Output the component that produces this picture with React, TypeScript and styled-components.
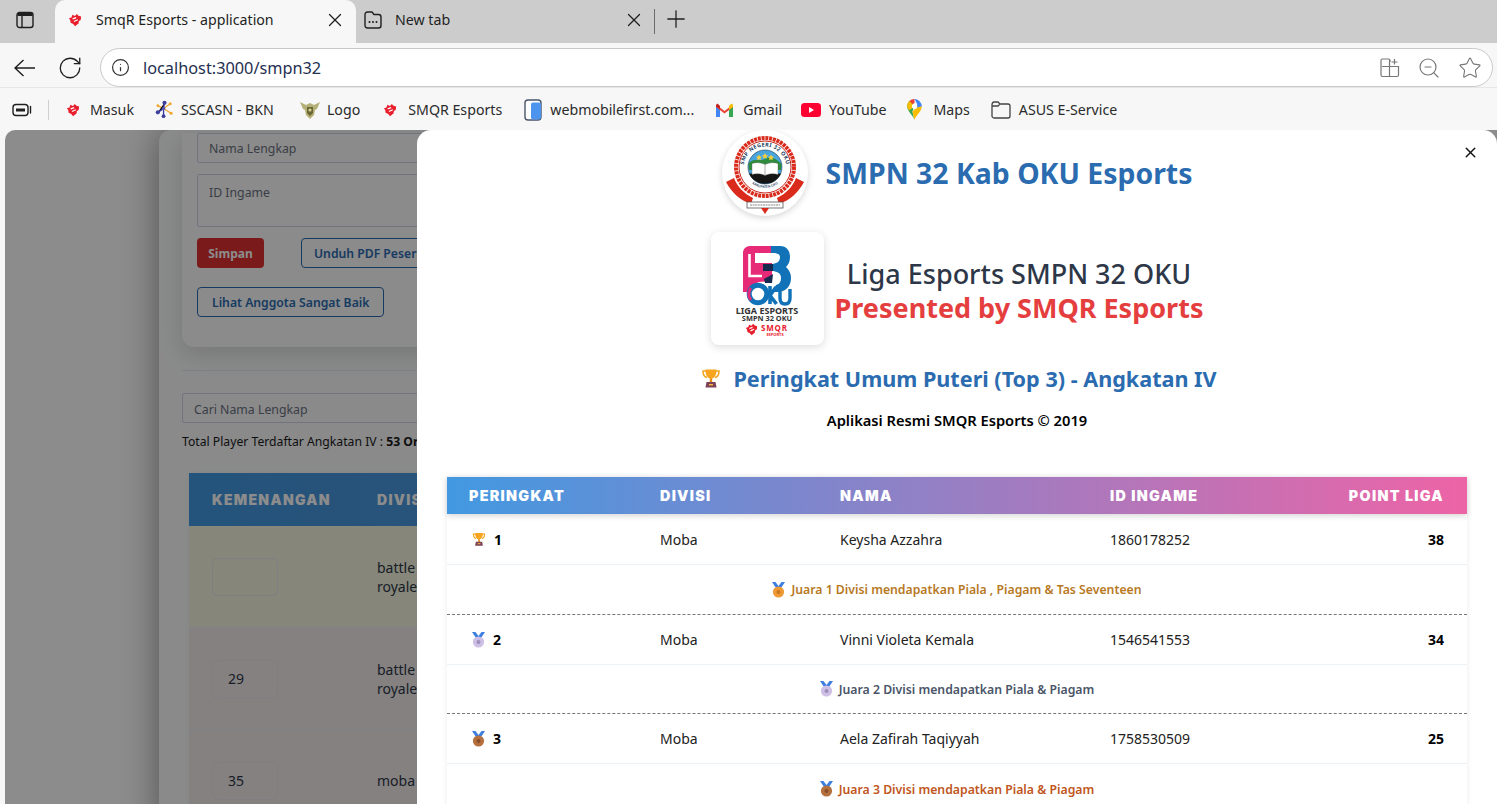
import React from 'react';
import styled, { createGlobalStyle } from 'styled-components';
import { RotateCw, Info, ZoomOut, Star, X, Plus } from 'lucide-react';

const GlobalStyle = createGlobalStyle`
  html, body {
    margin: 0;
    padding: 0;
    height: 100%;
    overflow: hidden;
    font-family: "Noto Sans", "Open Sans", sans-serif;
    background: #f7f7f7;
  }
  * { box-sizing: border-box; }
`;

const SmqrMark = ({ size = 14 }: { size?: number }) => (
  <svg width={size} height={size} viewBox="0 0 16 16">
    <path d="M1 6 L4 5 L5 2 L8 3.5 L10 1 L12 3 L15 4 L14.5 8 L12.5 9 L12 12 L8 15 L6 12.5 L3 11 L2.5 8 Z" fill="#e8202e" />
    <path d="M5 6 L9 4.5 L9.6 6 L5.6 7.5 Z M6.5 9 L11 7 L11.5 8.4 L7 10.4 Z" fill="#fff" />
  </svg>
);

const SscasnIcon = () => (
  <svg width="19" height="19" viewBox="0 0 20 20">
    <path d="M9 9 L17 14 M9 9 L16 4 M3 6 L9 9" stroke="#f0a830" strokeWidth="1.4" />
    <path d="M3 13 L9 9 L10 3 M9 9 L9 17" stroke="#3c3f9e" strokeWidth="1.4" />
    <circle cx="10" cy="3" r="2.2" fill="#3c3f9e" />
    <circle cx="3" cy="13" r="2.2" fill="#3c3f9e" />
    <circle cx="9" cy="17" r="2" fill="#3c3f9e" />
    <circle cx="16" cy="4" r="1.6" fill="#f0a830" />
    <circle cx="17" cy="14" r="1.6" fill="#f0a830" />
    <circle cx="3" cy="6" r="1.4" fill="#f0a830" />
    <circle cx="9" cy="9" r="1.8" fill="#5a55b8" />
  </svg>
);

const LogoIcon = () => (
  <svg width="20" height="20" viewBox="0 0 20 20">
    <path d="M0 2 L6 5 L10 3 L14 5 L20 2 L17 9 L15 10 L14 15 L10 19 L6 15 L5 10 L3 9 Z" fill="#b5b078" />
    <path d="M7 7 H13 V13 L10 16 L7 13 Z" fill="#6a6636" />
    <circle cx="10" cy="10" r="1.6" fill="#d8d48e" />
  </svg>
);

const PhoneIcon = () => (
  <svg width="20" height="22" viewBox="0 0 20 22">
    <rect x="1" y="1" width="16" height="20" rx="3" fill="#fff" stroke="#4a5568" strokeWidth="1.4" />
    <rect x="7" y="3.5" width="10" height="17" rx="2" fill="#4d94ee" />
  </svg>
);

const GmailIcon = () => (
  <svg width="17" height="14" viewBox="0 0 17 14">
    <path d="M0 2 V14 H4 V5 Z" fill="#4285f4" />
    <path d="M13 5 V14 H17 V2 Z" fill="#34a853" />
    <path d="M0 1.5 L8.5 8 L17 1.5 V4 L8.5 10.5 L0 4 Z" fill="#ea4335" />
    <path d="M13 3 L15.5 0.6 L17 2 V4 L13 7 Z" fill="#fbbc04" />
    <path d="M0 2 L1.5 0.6 L4 3 V6.2 L0 3.5 Z" fill="#c5221f" />
  </svg>
);

const YoutubeIcon = () => (
  <svg width="20" height="14" viewBox="0 0 20 14">
    <rect width="20" height="14" rx="3.5" fill="#ff0033" />
    <path d="M8 4 L13 7 L8 10 Z" fill="#fff" />
  </svg>
);

const MapsIcon = () => (
  <svg width="15" height="21" viewBox="0 0 14 20">
    <path d="M7 20 C6 16 0 12 0 7 C0 5 1 3 2 2 L7 7 L5 12 Z" fill="#34a853" />
    <path d="M7 20 C8 16 14 12 14 7 L9 8 L5 12 Z" fill="#fbbc04" />
    <path d="M2 2 C3.4 .7 5 0 7 0 L7 4 L4.5 5 Z" fill="#ea4335" />
    <path d="M7 0 C10 0 14 3 14 7 L9.5 8 L9.5 4.8 Z" fill="#4285f4" />
    <path d="M2 2 L7 7 L2 11 C.6 9.6 0 8.2 0 7 C0 5 1 3 2 2 Z" fill="#fbbc04" />
    <circle cx="7" cy="7" r="2.5" fill="#fff" />
  </svg>
);

const FolderIcon = () => (
  <svg width="20" height="18" viewBox="0 0 20 18" fill="none">
    <path d="M1 4 C1 2 2 1 3 1 H7 L9 3 H17 C18 3 19 4 19 5 V15 C19 16 18 17 17 17 H3 C2 17 1 16 1 15 Z M1 5 H7 L9 3" stroke="#444" strokeWidth="1.3" />
  </svg>
);

const SidebarIcon = () => (
  <svg width="18" height="18" viewBox="0 0 18 18" fill="none">
    <rect x="1" y="1.5" width="16" height="15" rx="2.5" stroke="#1f1f1f" strokeWidth="1.4" />
    <path d="M1.5 5 H16.5 V2 H1.5 Z" fill="#1f1f1f" />
    <path d="M6 5 V16" stroke="#1f1f1f" strokeWidth="1.4" />
  </svg>
);

const NewTabIcon = () => (
  <svg width="18" height="18" viewBox="0 0 18 18" fill="none">
    <path d="M3.5 1 H8 L10 3.5 H14.5 C16 3.5 17 4.5 17 6 V14.5 C17 16 16 17 14.5 17 H3.5 C2 17 1 16 1 14.5 V3.5 C1 2 2 1 3.5 1 Z" stroke="#1f1f1f" strokeWidth="1.4" />
    <circle cx="5.5" cy="11" r="1" fill="#1f1f1f" />
    <circle cx="9" cy="11" r="1" fill="#1f1f1f" />
    <circle cx="12.5" cy="11" r="1" fill="#1f1f1f" />
  </svg>
);

const WorkspaceIcon = () => (
  <svg width="20" height="14" viewBox="0 0 20 14" fill="none">
    <rect x="1" y="1.5" width="15" height="11" rx="3" stroke="#1f1f1f" strokeWidth="1.4" />
    <path d="M4 5.5 H13 V8.5 H4 Z" fill="#1f1f1f" />
    <path d="M18.5 3.5 V10" stroke="#1f1f1f" strokeWidth="1.4" strokeLinecap="round" />
  </svg>
);

const BackArrow = () => (
  <svg width="21" height="18" viewBox="0 0 21 18" fill="none" stroke="#1f1f1f" strokeWidth="1.4">
    <path d="M1 9 H21 M9.5 1 L1 9 L9.5 17" />
  </svg>
);

const AppsIcon = () => (
  <svg width="20" height="20" viewBox="0 0 20 20" fill="none" stroke="#777" strokeWidth="1.2">
    <path d="M10 4 V2.5 C10 1.6 9.4 1 8.5 1 H2.5 C1.6 1 1 1.6 1 2.5 V17 C1 18 1.6 18.5 2.5 18.5 H17 C18 18.5 18.5 18 18.5 17 V8.5 H2" />
    <path d="M9.5 2 V18.5 M14.5 1 V6.5 M11.5 4 H17.5" />
  </svg>
);

const TrophyIcon = ({ size }: { size: number }) => (
  <svg width={size} height={size} viewBox="0 0 20 20">
    <path d="M5 3 H2 C2 7 3.5 9 6 9.5 M15 3 H18 C18 7 16.5 9 14 9.5" fill="none" stroke="#f5a623" strokeWidth="1.6" />
    <path d="M4.5 1.5 H15.5 C15.5 7 14 10 10 11 C6 10 4.5 7 4.5 1.5 Z" fill="#f7a51e" />
    <rect x="8.8" y="10.5" width="2.4" height="4" fill="#e58a14" />
    <path d="M5.5 14 H14.5 L15.5 19.5 H4.5 Z" fill="#7d4256" />
    <rect x="8" y="16" width="4" height="1.4" fill="#f5b642" />
  </svg>
);

const MedalIcon = ({ fill, mark }: { fill: string; mark: string }) => (
  <svg width="13" height="16" viewBox="0 0 13 16">
    <path d="M0 0 H3.5 L6.5 4 L9.5 0 H13 L9 6 H4 Z" fill="#3f7fe0" />
    <circle cx="6.5" cy="10" r="5.6" fill={fill} />
    <circle cx="6.5" cy="10" r="2" fill={mark} />
  </svg>
);

const CrestIcon = () => (
  <svg width="84" height="84" viewBox="0 0 84 84">
    <defs>
      <path id="crest-arc" d="M20.5 37 A21.5 21.5 0 0 1 63.5 37" />
      <path id="crest-arc-low" d="M21 40 A21.5 21.5 0 0 0 63 40" />
    </defs>
    <path d="M3 51 L11 47 C14 55 20 62 30 67 L28 73 C17 69 9 62 3 51 Z M81 51 L73 47 C70 55 64 62 54 67 L56 73 C67 69 75 62 81 51 Z" fill="#d92a1c" />
    <circle cx="42" cy="36" r="29" fill="#fff" stroke="#d92a1c" strokeWidth="4" strokeDasharray="3 .8" />
    <circle cx="42" cy="36" r="26" fill="#fff" stroke="#c62419" strokeWidth="1" />
    <text fontSize="5.4" fontWeight="700" fill="#1d3d5f" letterSpacing=".4">
      <textPath href="#crest-arc" startOffset="50%" textAnchor="middle">SMP NEGERI 32 OKU</textPath>
    </text>
    <text fontSize="3.4" fontWeight="600" fill="#1d3d5f">
      <textPath href="#crest-arc-low" startOffset="50%" textAnchor="middle">KABUPATEN OKU</textPath>
    </text>
    <circle cx="42" cy="36" r="17" fill="#49a6dc" stroke="#1d3d5f" strokeWidth=".6" />
    <path d="M25.5 33 C30 26 36 31 42 28 C47 25 53 27 58.5 33 L58 39 H26 Z" fill="#2e8b3d" />
    <path d="M26 42.5 H58 C55 49 49 52.8 42 52.8 C35 52.8 29 49 26 42.5 Z" fill="#151515" />
    <path d="M29 32.5 C33 31 38 31.5 42 33.5 C46 31.5 51 31 55 32.5 V43.5 C51 42 46 42.5 42 44.5 C38 42.5 33 42 29 43.5 Z" fill="#fff" stroke="#666" strokeWidth=".4" />
    <path d="M42 33.5 V44.5" stroke="#777" strokeWidth=".6" />
    <path d="M36 23.5 l1 2 l2 .3 l-1.5 1.4 l.4 2 l-1.9 -1 l-1.9 1 l.4 -2 l-1.5 -1.4 l2 -.3 Z M42 22 l1 2 l2 .3 l-1.5 1.4 l.4 2 l-1.9 -1 l-1.9 1 l.4 -2 l-1.5 -1.4 l2 -.3 Z M48 23.5 l1 2 l2 .3 l-1.5 1.4 l.4 2 l-1.9 -1 l-1.9 1 l.4 -2 l-1.5 -1.4 l2 -.3 Z" fill="#f4d03f" />
    <rect x="24" y="71" width="36" height="6" fill="#fff" stroke="#555" strokeWidth=".8" />
    <path d="M27 74 H57" stroke="#888" strokeWidth="1" strokeDasharray="2 .6" />
    <path d="M38 77 H46 L42 83 Z" fill="#d92a1c" />
  </svg>
);

// logo of the league: the captions are part of the drawing, tightly packed as in the original
const LigaLogo = () => (
  <svg width="70" height="94" viewBox="0 0 70 94" fill="none">
    <g transform="translate(10 0)">
      <path d="M8 1 H30 V34 C26 36 22 37 17 37 C13 38 9 42 8 47 H1 V8 C1 4 4 1 8 1 Z" fill="#e62a78" />
      <path d="M7.5 9 V31 H20" stroke="#fff" strokeWidth="2.6" />
      <rect x="13" y="8" width="17" height="10" fill="#fff" />
      <path d="M29 1 H38 C45 1 48 6 48 12 C48 17 46 20 44 22 C47 25 49 28 49 33 C49 41 44 47 35 47 H29 C31 45 33 42 34 40 C38 39 39 36 39 33 C39 28 35 26 29 26 V19 C34 19 38 17 38 12 C38 9 35 8 29 8 Z" fill="#1272b8" />
      <path d="M21 19 H31 V26 H21 Z M22 34 L31 29 L30 38 L23 38 Z" fill="#16294f" />
      <circle cx="16" cy="49" r="8.8" stroke="#1272b8" strokeWidth="5" />
      <path d="M9 43 C6 46 6 52 9 55" stroke="#e62a78" strokeWidth="3" />
      <path d="M28 41 V59 M34 42 L28 50.5 L34.5 59" stroke="#1272b8" strokeWidth="3.6" />
      <path d="M38 44 V53 C38 57 40 59 43 59 C46 59 48 57 48 53 V44" stroke="#1272b8" strokeWidth="3.4" />
    </g>
    <text x="35" y="69" textAnchor="middle" fontSize="9" fontWeight="700" fill="#333">LIGA ESPORTS</text>
    <text x="35" y="76" textAnchor="middle" fontSize="7.4" fontWeight="700" fill="#333">SMPN 32 OKU</text>
    <g transform="translate(13 78)"><SmqrMark size={13} /></g>
    <text x="29" y="86" fontSize="8" fontWeight="700" letterSpacing=".8" fill="#e8202e">SMQR</text>
    <text x="43" y="90.5" textAnchor="middle" fontSize="4" fontWeight="700" fill="#e8202e">ESPORTS</text>
  </svg>
);

const Browser = styled.div`
  width: 1497px;
  height: 804px;
  display: flex;
  flex-direction: column;
  overflow: hidden;
  background: #f7f7f7;
`;

const TabStrip = styled.div`
  height: 43px;
  background: #cccccc;
  display: flex;
  align-items: flex-end;
  flex-shrink: 0;
`;

const SideButton = styled.div`
  width: 55px;
  height: 39px;
  display: flex;
  align-items: center;
  justify-content: center;
  padding-bottom: 7px;
  padding-right: 5px;
`;

const Tab = styled.div<{ $active?: boolean }>`
  height: ${p => (p.$active ? '43px' : '39px')};
  display: flex;
  align-items: center;
  width: ${p => (p.$active ? '301px' : '298px')};
  padding: ${p => (p.$active ? '0 10px 4px 13px' : '0 9px 8px 8px')};
  font-size: 14.2px;
  color: #1f1f1f;
  background: ${p => (p.$active ? '#f7f7f7' : 'transparent')};
  border-radius: ${p => (p.$active ? '10px 10px 0 0' : '0')};
`;

const TabTitle = styled.span<{ $gap: number }>`
  flex: 1;
  margin-left: ${p => p.$gap}px;
  white-space: nowrap;
`;

const TabDivider = styled.div`
  width: 1px;
  height: 25px;
  background: #6c6c6c;
  margin-top: 9px;
  align-self: flex-start;
`;

const NewTabButton = styled.div`
  display: flex;
  align-self: flex-start;
  margin-left: 7px;
  margin-top: 5px;
`;

const Toolbar = styled.div`
  height: 44px;
  flex-shrink: 0;
  display: flex;
  align-items: center;
  padding: 5px 4px 0 14px;
  background: #f7f7f7;
`;

const NavButton = styled.div<{ $width: number }>`
  width: ${p => p.$width}px;
  display: flex;
  align-items: center;
`;

const AddressBar = styled.div`
  flex: 1;
  height: 39px;
  margin-left: -2px;
  background: #ffffff;
  border: 1px solid #c9c9c9;
  border-radius: 20px;
  display: flex;
  align-items: center;
  padding: 0 10px 0 10px;
`;

const Url = styled.span`
  flex: 1;
  margin-left: 13px;
  font-size: 16.3px;
  color: #1f3050;
`;

const AddressActions = styled.div`
  display: flex;
  align-items: center;
  gap: 17px;
`;

const BookmarkBar = styled.div`
  height: 43px;
  flex-shrink: 0;
  display: flex;
  align-items: center;
  padding: 1px 0 0 12px;
  background: #f7f7f7;
  border-top: 1px solid #e6e6e6;
`;

const BarDivider = styled.div`
  width: 1px;
  height: 20px;
  background: #cfcfcf;
  margin: 0 17px 0 16px;
`;

const Bookmark = styled.div<{ $gap: number; $after: number }>`
  display: flex;
  align-items: center;
  gap: ${p => p.$gap}px;
  margin-right: ${p => p.$after}px;
  font-size: 14.2px;
  color: #2b2b2b;
  white-space: nowrap;
`;

const Viewport = styled.div`
  position: relative;
  flex: 1;
  margin-left: 5px;
  border-radius: 10px 0 0 0;
  overflow: hidden;
  background: #ffffff;
`;

const Sheet = styled.div`
  margin-left: 154px;
  width: 1200px;
  height: 700px;
  background: #fbfcfd;
  border-radius: 12px 0 0 0;
  box-shadow: 0 0 36px rgba(0, 0, 0, 0.42);
  padding: 3px 23px 0 23px;
`;

const FormCard = styled.div`
  height: 214px;
  background: #fdfdfe;
  border-radius: 0 0 12px 12px;
  padding: 0 15px;
  box-shadow: 0 8px 24px rgba(0, 0, 0, 0.14);
  display: flex;
  flex-direction: column;
`;

const FieldBox = styled.div<{ $h: number; $mb: number }>`
  height: ${p => p.$h}px;
  margin-bottom: ${p => p.$mb}px;
  border: 1px solid #ced4e6;
  border-radius: 2px;
  padding: ${p => (p.$h > 40 ? '9px 11px' : '0 11px')};
  display: flex;
  align-items: ${p => (p.$h > 40 ? 'flex-start' : 'center')};
  font-size: 12.3px;
  color: #6b7280;
`;

const ButtonRow = styled.div`
  display: flex;
  gap: 37px;
  margin-bottom: 19px;
`;

const SaveButton = styled.div`
  width: 67px;
  height: 30px;
  background: #e03131;
  color: #fff;
  border-radius: 4px;
  font-size: 12px;
  font-weight: 700;
  display: flex;
  align-items: center;
  justify-content: center;
`;

const OutlineButton = styled.div<{ $width: number; $pad: number }>`
  width: ${p => p.$width}px;
  height: 30px;
  padding-left: ${p => p.$pad}px;
  border: 1px solid #2b6cb0;
  border-radius: 4px;
  color: #2b6cb0;
  font-size: 12.2px;
  font-weight: 600;
  display: flex;
  align-items: center;
  white-space: nowrap;
`;

const Rule = styled.div`
  height: 1px;
  background: #e4e8f0;
  margin: 23px 0 22px;
`;

const SearchBox = styled(FieldBox)`
  margin-bottom: 10px;
  padding-top: 2px;
`;

const TotalLine = styled.div`
  font-size: 12.2px;
  color: #1a1a1a;
  margin-bottom: 23px;
  white-space: nowrap;
`;

const BackTable = styled.div`
  margin-left: 7px;
  box-shadow: 0 0 8px rgba(0, 0, 0, 0.05);
`;

const BackHead = styled.div`
  height: 53px;
  display: grid;
  grid-template-columns: 165px 1fr;
  align-items: center;
  padding-left: 23px;
  background: linear-gradient(90deg, #4299e1, #6c8ed0);
  color: #fff;
  font-size: 14px;
  font-weight: 900;
  letter-spacing: 1.3px;
  font-family: "Inter", sans-serif;
`;

const BackRow = styled.div<{ $tint: string }>`
  height: 102px;
  display: grid;
  grid-template-columns: 165px 42px;
  align-items: center;
  padding-left: 23px;
  background: ${p => p.$tint};
  border-bottom: 1px solid #eceff5;
  font-size: 14px;
  color: #2d3748;
`;

const WinInput = styled.div`
  width: 66px;
  height: 38px;
  border: 1px solid #e6e6ee;
  border-radius: 5px;
  padding: 0 15px;
  display: flex;
  align-items: center;
`;

const Backdrop = styled.div`
  position: absolute;
  inset: 0;
  background: rgba(0, 0, 0, 0.45);
`;

const Modal = styled.div`
  position: absolute;
  top: 0;
  left: 412px;
  right: 0;
  bottom: 0;
  background: #ffffff;
  border-radius: 14px 14px 0 0;
  padding: 0 30px;
  overflow: hidden;
`;

const CloseButton = styled.div`
  position: absolute;
  top: 14px;
  right: 18px;
  display: flex;
`;

const SchoolHeader = styled.div`
  display: flex;
  align-items: center;
  justify-content: center;
  gap: 18px;
  height: 85px;
  margin-bottom: 17px;
`;

const CrestBadge = styled.div`
  width: 86px;
  height: 86px;
  border-radius: 50%;
  background: #fff;
  box-shadow: 0 2px 6px rgba(0, 0, 0, 0.16);
  display: flex;
  align-items: center;
  justify-content: center;
`;

const SchoolName = styled.h1`
  margin: 0;
  font-size: 28.4px;
  font-weight: 700;
  color: #2b6cb0;
  white-space: nowrap;
`;

const LigaHeader = styled.div`
  display: flex;
  align-items: center;
  justify-content: center;
  gap: 11px;
  margin-bottom: 15px;
`;

const LigaCard = styled.div`
  width: 113px;
  height: 113px;
  background: #fff;
  border-radius: 8px;
  box-shadow: 0 2px 8px rgba(0, 0, 0, 0.14);
  display: flex;
  justify-content: center;
  padding-top: 13px;
`;

const LigaTitles = styled.div`
  text-align: center;
`;

const LigaTitle = styled.div`
  font-size: 27px;
  line-height: 36px;
  padding-top: 1px;
  font-weight: 500;
  color: #2d3748;
  white-space: nowrap;
`;

const LigaSub = styled.div`
  font-size: 27px;
  line-height: 31px;
  font-weight: 700;
  color: #e53e3e;
  white-space: nowrap;
`;

const RankHeading = styled.h2`
  margin: 0 0 15px;
  height: 36px;
  padding-left: 4px;
  display: flex;
  align-items: center;
  justify-content: center;
  gap: 12px;
  font-size: 21.6px;
  font-weight: 700;
  color: #2b6cb0;
  white-space: nowrap;
`;

const Copyright = styled.div`
  text-align: center;
  font-size: 14.7px;
  font-weight: 600;
  color: #000;
  height: 19px;
  line-height: 19px;
  margin-bottom: 47px;
`;

const RankTable = styled.div`
  box-shadow: 0 0 6px rgba(0, 0, 0, 0.08);
`;

const columns = '191px 180px 270px 1fr 100px';

const RankHead = styled.div`
  height: 37px;
  display: grid;
  grid-template-columns: ${columns};
  align-items: center;
  padding: 0 23px 0 22px;
  background: linear-gradient(90deg, #4299e1, #ed64a6);
  box-shadow: 0 2px 6px rgba(0, 0, 0, 0.16);
  color: #fff;
  font-family: "Inter", sans-serif;
  font-size: 14.3px;
  font-weight: 900;
  letter-spacing: 1.3px;
  position: relative;
`;

const HeadCell = styled.div<{ $end?: boolean }>`
  text-align: ${p => (p.$end ? 'right' : 'left')};
  white-space: nowrap;
`;

const RankRow = styled.div<{ $h: number }>`
  height: ${p => p.$h}px;
  display: grid;
  grid-template-columns: ${columns};
  align-items: center;
  padding: 0 23px 0 22px;
  border-bottom: 1px solid #edf2f7;
  font-size: 14px;
  color: #222;
`;

const RankCell = styled.div`
  display: flex;
  align-items: center;
  gap: 8px;
  padding-left: 3px;
  font-weight: 700;
  color: #000;
`;

const PointCell = styled.div`
  text-align: right;
  font-weight: 700;
  color: #000;
`;

const PrizeRow = styled.div<{ $h: number; $color: string; $dashed: boolean }>`
  height: ${p => p.$h}px;
  display: flex;
  align-items: center;
  justify-content: center;
  gap: 6px;
  font-size: 12.25px;
  font-weight: 600;
  color: ${p => p.$color};
  border-bottom: ${p => (p.$dashed ? '1px dashed #777' : 'none')};
`;

const rows = [
  {
    rank: 1, name: 'Keysha Azzahra', id: '1860178252', point: 38, h: 51, prizeH: 50,
    prize: 'Juara 1 Divisi mendapatkan Piala , Piagam & Tas Seventeen',
    color: '#b7791f', medal: '#f09a36', mark: '#c9761d',
  },
  {
    rank: 2, name: 'Vinni Violeta Kemala', id: '1546541553', point: 34, h: 50, prizeH: 49,
    prize: 'Juara 2 Divisi mendapatkan Piala & Piagam',
    color: '#4a5568', medal: '#cdbfe6', mark: '#9c8fba',
  },
  {
    rank: 3, name: 'Aela Zafirah Taqiyyah', id: '1758530509', point: 25, h: 50, prizeH: 50,
    prize: 'Juara 3 Divisi mendapatkan Piala & Piagam',
    color: '#c05621', medal: '#b5703f', mark: '#8a4d26',
  },
];

const bookmarks = [
  { label: 'Masuk', icon: <SmqrMark />, gap: 10, after: 21 },
  { label: 'SSCASN - BKN', icon: <SscasnIcon />, gap: 7, after: 26 },
  { label: 'Logo', icon: <LogoIcon />, gap: 7, after: 23 },
  { label: 'SMQR Esports', icon: <SmqrMark />, gap: 11, after: 22 },
  { label: 'webmobilefirst.com...', icon: <PhoneIcon />, gap: 6, after: 22 },
  { label: 'Gmail', icon: <GmailIcon />, gap: 10, after: 19 },
  { label: 'YouTube', icon: <YoutubeIcon />, gap: 8, after: 21 },
  { label: 'Maps', icon: <MapsIcon />, gap: 11, after: 21 },
  { label: 'ASUS E-Service', icon: <FolderIcon />, gap: 8, after: 0 },
];

export default function App() {
  return (
    <Browser>
      <GlobalStyle />
      <TabStrip>
        <SideButton><SidebarIcon /></SideButton>
        <Tab $active>
          <SmqrMark />
          <TabTitle $gap={14}>SmqR Esports - application</TabTitle>
          <X size={22} color="#1f1f1f" strokeWidth={1.4} />
        </Tab>
        <Tab>
          <NewTabIcon />
          <TabTitle $gap={13}>New tab</TabTitle>
          <X size={22} color="#1f1f1f" strokeWidth={1.4} />
        </Tab>
        <TabDivider />
        <NewTabButton><Plus size={28} color="#1f1f1f" strokeWidth={1.1} /></NewTabButton>
      </TabStrip>

      <Toolbar>
        <NavButton $width={43}><BackArrow /></NavButton>
        <NavButton $width={45}><RotateCw size={26} color="#1f1f1f" strokeWidth={1.2} /></NavButton>
        <AddressBar>
          <Info size={19} color="#333" strokeWidth={1.5} />
          <Url>localhost:3000/smpn32</Url>
          <AddressActions>
            <AppsIcon />
            <ZoomOut size={24} color="#777" strokeWidth={1.2} />
            <Star size={24} color="#777" strokeWidth={1.1} />
          </AddressActions>
        </AddressBar>
      </Toolbar>

      <BookmarkBar>
        <WorkspaceIcon />
        <BarDivider />
        {bookmarks.map(b => (
          <Bookmark key={b.label} $gap={b.gap} $after={b.after}>
            {b.icon}
            {b.label}
          </Bookmark>
        ))}
      </BookmarkBar>

      <Viewport>
        <Sheet>
          <FormCard>
            <FieldBox $h={30} $mb={11}>Nama Lengkap</FieldBox>
            <FieldBox $h={53} $mb={11}>ID Ingame</FieldBox>
            <ButtonRow>
              <SaveButton>Simpan</SaveButton>
              <OutlineButton $width={200} $pad={12}>Unduh PDF Peserta</OutlineButton>
            </ButtonRow>
            <OutlineButton $width={187} $pad={14}>Lihat Anggota Sangat Baik</OutlineButton>
          </FormCard>
          <Rule />
          <SearchBox $h={30} $mb={10}>Cari Nama Lengkap</SearchBox>
          <TotalLine>Total Player Terdaftar Angkatan IV : <b>53 Orang</b></TotalLine>
          <BackTable>
            <BackHead><span>KEMENANGAN</span><span>DIVISI</span></BackHead>
            <BackRow $tint="#f4f4de"><WinInput /><span>battle royale</span></BackRow>
            <BackRow $tint="#f2ebeb"><WinInput>29</WinInput><span>battle royale</span></BackRow>
            <BackRow $tint="#f2ebeb"><WinInput>35</WinInput><span>moba</span></BackRow>
          </BackTable>
        </Sheet>
        <Backdrop />
        <Modal>
          <CloseButton><X size={17} color="#111" strokeWidth={2} /></CloseButton>
          <SchoolHeader>
            <CrestBadge><CrestIcon /></CrestBadge>
            <SchoolName>SMPN 32 Kab OKU Esports</SchoolName>
          </SchoolHeader>
          <LigaHeader>
            <LigaCard><LigaLogo /></LigaCard>
            <LigaTitles>
              <LigaTitle>Liga Esports SMPN 32 OKU</LigaTitle>
              <LigaSub>Presented by SMQR Esports</LigaSub>
            </LigaTitles>
          </LigaHeader>
          <RankHeading>
            <TrophyIcon size={20} />
            Peringkat Umum Puteri (Top 3) - Angkatan IV
          </RankHeading>
          <Copyright>Aplikasi Resmi SMQR Esports © 2019</Copyright>
          <RankTable>
            <RankHead>
              <HeadCell>PERINGKAT</HeadCell>
              <HeadCell>DIVISI</HeadCell>
              <HeadCell>NAMA</HeadCell>
              <HeadCell>ID INGAME</HeadCell>
              <HeadCell $end>POINT LIGA</HeadCell>
            </RankHead>
            {rows.map((r, i) => (
              <React.Fragment key={r.rank}>
                <RankRow $h={r.h}>
                  <RankCell>
                    {r.rank === 1 ? <TrophyIcon size={14} /> : <MedalIcon fill={r.medal} mark={r.mark} />}
                    {r.rank}
                  </RankCell>
                  <div>Moba</div>
                  <div>{r.name}</div>
                  <div>{r.id}</div>
                  <PointCell>{r.point}</PointCell>
                </RankRow>
                <PrizeRow $h={r.prizeH} $color={r.color} $dashed={i < rows.length - 1}>
                  <MedalIcon fill={r.medal} mark={r.mark} />
                  {r.prize}
                </PrizeRow>
              </React.Fragment>
            ))}
          </RankTable>
        </Modal>
      </Viewport>
    </Browser>
  );
}
